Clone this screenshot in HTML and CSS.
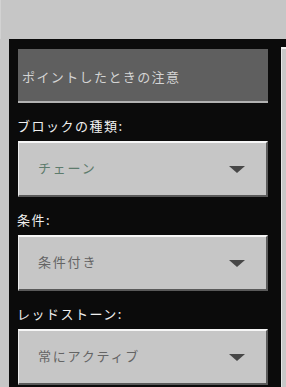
FILE: index.html
```html
<!DOCTYPE html>
<html lang="ja">
<head>
  <meta charset="UTF-8">
  <title>コマンドブロック</title>
  <link rel="stylesheet" href="styles.css">
</head>
<body>
  <div class="top"></div>
  <div class="main">
    <div class="edge-left"></div>
    <div class="panel">
      <div class="hint">ポイントしたときの注意</div>

      <div class="label">ブロックの種類:</div>
      <div class="dropdown">
        <span class="value chain">チェーン</span>
        <span class="arrow"></span>
      </div>

      <div class="label">条件:</div>
      <div class="dropdown">
        <span class="value">条件付き</span>
        <span class="arrow"></span>
      </div>

      <div class="label">レッドストーン:</div>
      <div class="dropdown">
        <span class="value">常にアクティブ</span>
        <span class="arrow"></span>
      </div>
    </div>
    <div class="edge-right">
      <div class="strip"></div>
    </div>
  </div>
</body>
</html>
```

FILE: styles.css
```css
body {
  margin: 0;
  background-color: #c6c6c6;
  font-family: "Noto Sans CJK JP", "Noto Sans", sans-serif;
  overflow: hidden;
}

.top {
  height: 39px;
  border-left: 1px solid #d2d2d2;
  width: 8px;
}

.main {
  display: flex;
  height: 348px;
}

.edge-left {
  width: 9px;
}

.panel {
  width: 250px;
  background-color: #0b0b0b;
  padding: 10px 12px 0 9px;
}

.edge-right {
  flex: 1;
  background-color: #0b0b0b;
  display: flex;
  flex-direction: column;
}

.strip {
  flex: 1;
  margin-top: 8px;
  margin-left: 1px;
  background-color: #c8c8c8;
  border-top: 2px solid #f2f2f2;
  border-left: 1px solid #e6e6e6;
}

/* tooltip text box */
.hint {
  height: 49px;
  background-color: #5f5f5f;
  border-bottom: 2px solid #b2b2b2;
  color: #d4d4d4;
  font-size: 13px;
  letter-spacing: 1.4px;
  padding: 3px 0 0 4px;
  display: flex;
  align-items: center;
}

.label {
  color: #f0f0f0;
  font-size: 13px;
  letter-spacing: 1.5px;
  line-height: 19px;
  padding: 13px 0 6px;
  margin-left: -1px;
}

.dropdown {
  height: 52px;
  background-color: #c6c6c6;
  border-top: 2px solid #f6f6f6;
  border-left: 1px solid #ececec;
  border-right: 2px solid #5a5a5a;
  border-bottom: 2px solid #5a5a5a;
  display: flex;
  align-items: center;
  justify-content: space-between;
  padding: 0 21px 0 19px;
}

.value {
  color: #646464;
  font-size: 13px;
  letter-spacing: 1.8px;
  margin-top: -3px;
}

.value.chain {
  color: #5d7b6c;
}

.arrow {
  width: 0;
  height: 0;
  border-left: 8px solid transparent;
  border-right: 8px solid transparent;
  border-top: 7px solid #474747;
  margin-top: 1px;
}
```
